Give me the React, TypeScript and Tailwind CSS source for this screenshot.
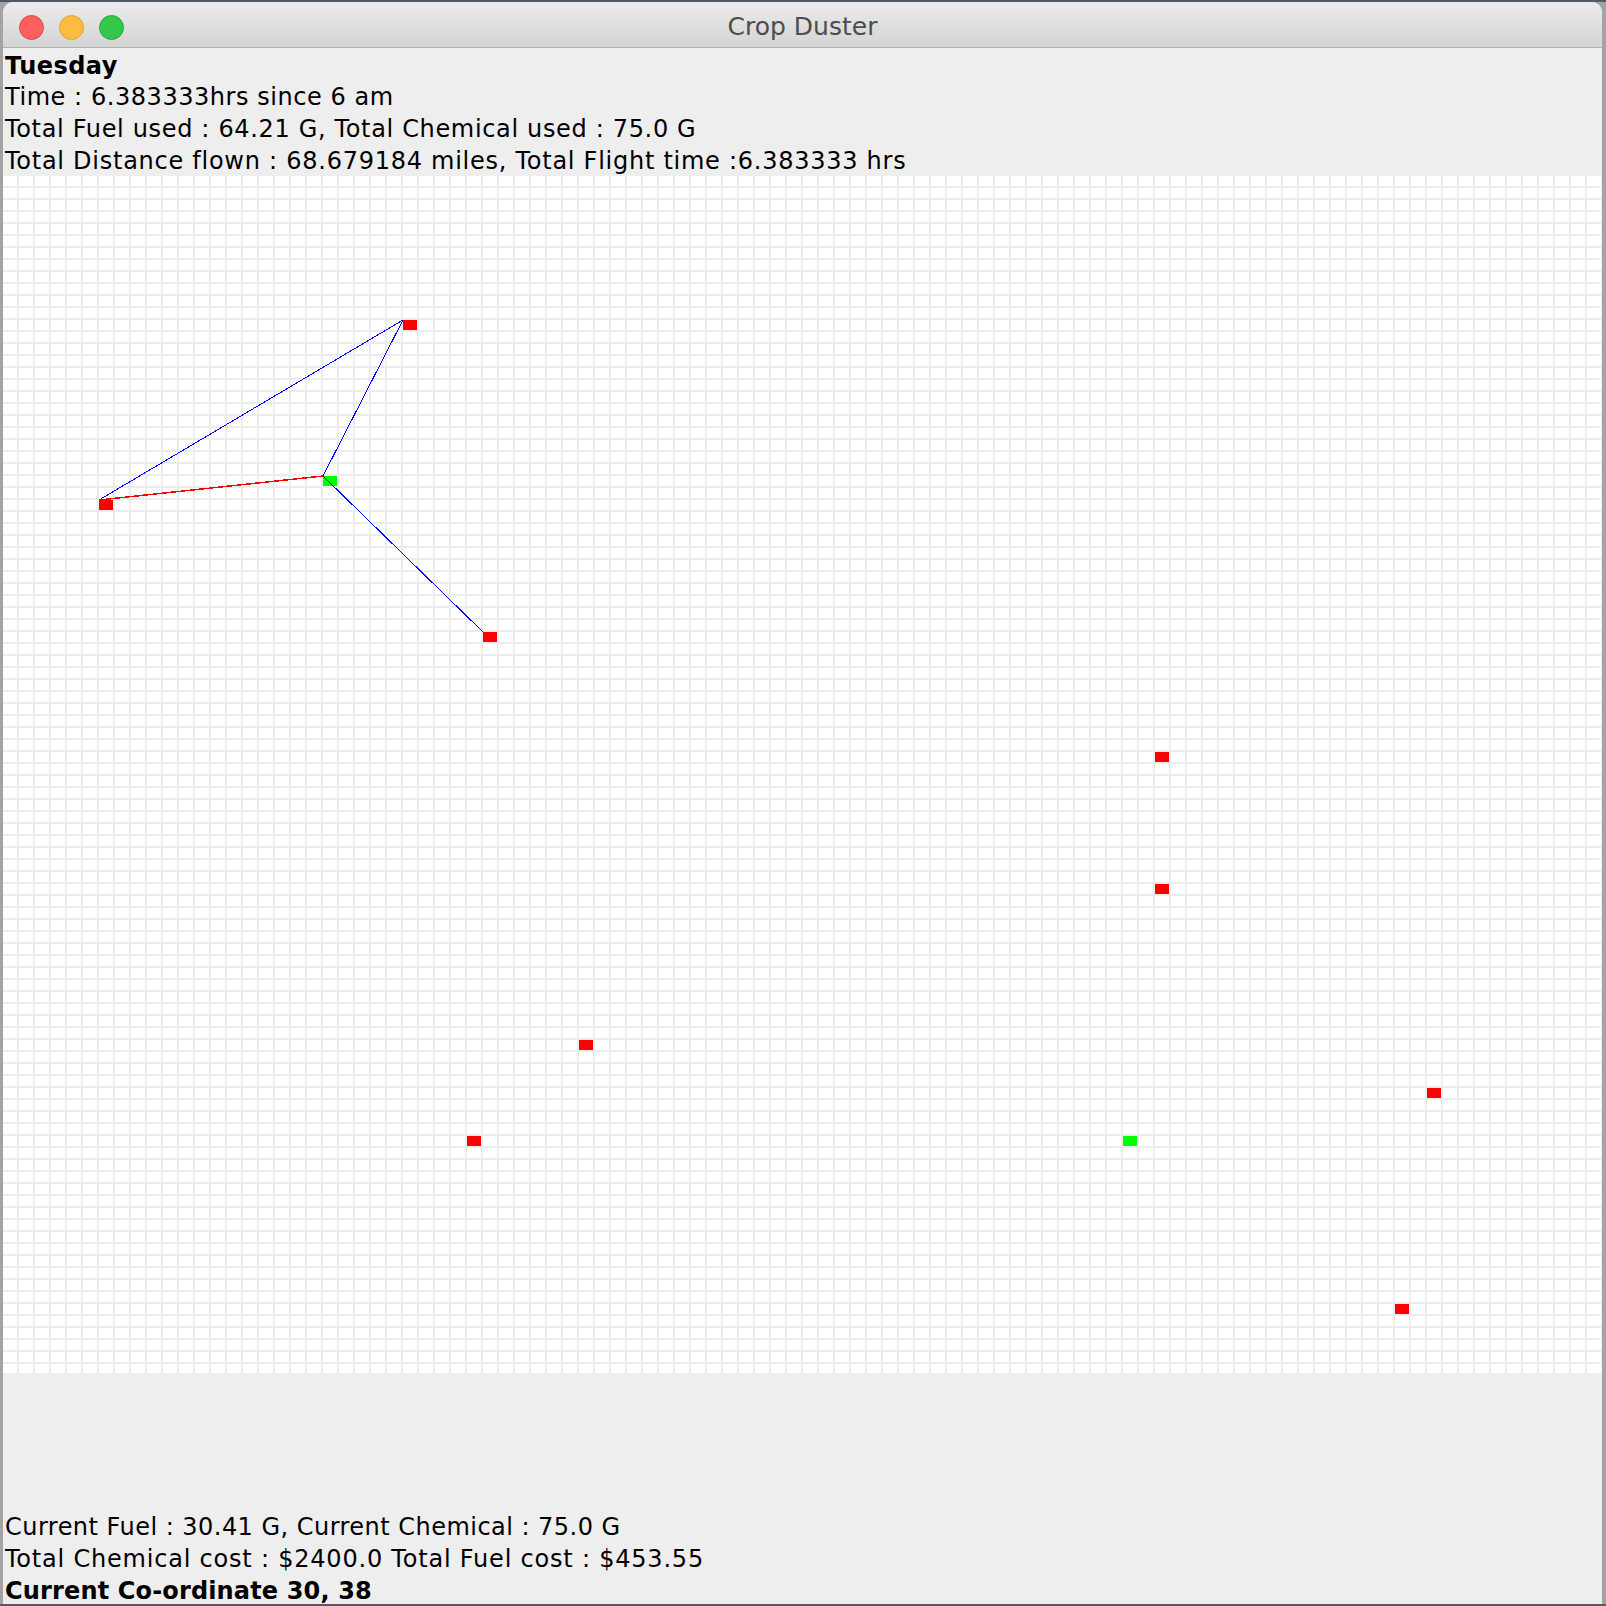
import React from 'react';

// Cells of the 100x100 field: each cell is 16 x 12 px, grid lines 2px at right/bottom.
const CELL_W = 16;
const CELL_H = 12;

type Cell = { c: number; r: number };

const fields: Cell[] = [
  { c: 25, r: 12 },
  { c: 6, r: 27 },
  { c: 30, r: 38 },
  { c: 72, r: 48 },
  { c: 72, r: 59 },
  { c: 36, r: 72 },
  { c: 29, r: 80 },
  { c: 89, r: 76 },
  { c: 87, r: 94 },
];

const airstrips: Cell[] = [
  { c: 20, r: 25 },
  { c: 70, r: 80 },
];

const pt = (p: Cell) => [p.c * CELL_W, p.r * CELL_H] as const;

function FieldMap() {
  const top = pt({ c: 25, r: 12 });
  const left = pt({ c: 6, r: 27 });
  const home = pt({ c: 20, r: 25 });
  const low = pt({ c: 30, r: 38 });

  return (
    <svg width={1599} height={1197} className="block shrink-0" shapeRendering="crispEdges">
      <defs>
        <pattern id="cells" width={CELL_W} height={CELL_H} patternUnits="userSpaceOnUse">
          <rect width={CELL_W} height={CELL_H} fill="#ececec" />
          <rect width={CELL_W - 2} height={CELL_H - 2} fill="#ffffff" />
        </pattern>
      </defs>
      <rect width={1599} height={1197} fill="url(#cells)" />

      {fields.map((f) => (
        <rect key={`f${f.c}-${f.r}`} x={f.c * CELL_W} y={f.r * CELL_H} width={14} height={10} fill="#ff0000" />
      ))}
      {airstrips.map((a) => (
        <rect key={`a${a.c}-${a.r}`} x={a.c * CELL_W} y={a.r * CELL_H} width={14} height={10} fill="#00ff00" />
      ))}

      {/* flight path */}
      <line x1={top[0]} y1={top[1]} x2={left[0]} y2={left[1]} stroke="#0000ff" strokeWidth={1} />
      <line x1={top[0]} y1={top[1]} x2={home[0]} y2={home[1]} stroke="#0000ff" strokeWidth={1} />
      <line x1={home[0]} y1={home[1]} x2={low[0]} y2={low[1]} stroke="#0000ff" strokeWidth={1} />
      <line x1={home[0]} y1={home[1]} x2={left[0]} y2={left[1]} stroke="#ff0000" strokeWidth={1.5} />
    </svg>
  );
}

export default function App() {
  return (
    <div className="w-[1606px] h-[1606px] bg-[#a3a3a3] flex flex-col overflow-hidden font-['DejaVu_Sans',sans-serif] text-black">
      {/* desktop strip above the window */}
      <div className="h-[2px] bg-[#4f5966] shrink-0" />

      <div className="flex-1 min-h-0 flex flex-col ml-[3px] mr-[4px] rounded-t-[10px] overflow-hidden bg-[#eeeeee]">
        {/* ── title bar ── */}
        <div className="relative h-[46px] shrink-0 flex items-center justify-center pt-[4px] bg-gradient-to-b from-[#ececec] to-[#d4d4d4] border-b border-[#b3b3b3]">
          <div className="absolute left-[16px] top-[13px] flex gap-[15px]">
            <span className="w-[25px] h-[25px] rounded-full bg-[#fc605c] border border-[#de4a44]" />
            <span className="w-[25px] h-[25px] rounded-full bg-[#fdbc40] border border-[#dea236]" />
            <span className="w-[25px] h-[25px] rounded-full bg-[#34c84a] border border-[#27a93a]" />
          </div>
          <span className="text-[25px] text-[#4d4d4d] font-['Lucida_Grande','DejaVu_Sans',sans-serif]">Crop Duster</span>
        </div>

        {/* ── totals ── */}
        <div className="h-[128px] shrink-0 pl-[2px] pt-[2px] text-[24px] leading-[32px] whitespace-nowrap">
          <div className="font-bold tracking-[0.45px] -mb-[1px]">Tuesday</div>
          <div className="tracking-[0.55px]">Time : 6.383333hrs since 6 am</div>
          <div className="tracking-[0.66px]">Total Fuel used : 64.21 G, Total Chemical used : 75.0 G</div>
          <div className="tracking-[0.74px]">Total Distance flown : 68.679184 miles, Total Flight time :6.383333 hrs</div>
        </div>

        {/* ── field grid ── */}
        <FieldMap />

        {/* ── current status ── */}
        <div className="flex-1 flex flex-col justify-end pl-[2px] text-[24px] leading-[32px] whitespace-nowrap">
          <div className="tracking-[0.47px]">Current Fuel : 30.41 G, Current Chemical : 75.0 G</div>
          <div className="tracking-[0.79px]">Total Chemical cost : $2400.0 Total Fuel cost : $453.55</div>
          <div className="h-[29px] font-bold tracking-[0.15px]">Current Co-ordinate 30, 38</div>
        </div>
      </div>
      <div className="h-[2px] bg-[#5a5a5a] shrink-0" />
    </div>
  );
}
